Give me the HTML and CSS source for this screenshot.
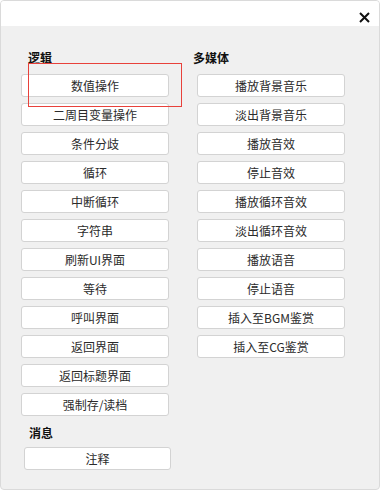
FILE: index.html
```html
<!DOCTYPE html>
<html>
<head>
<meta charset="UTF-8">
<link rel="stylesheet" href="styles.css">
</head>
<body>
<div class="WINDOW">
    <div class="TITLEBAR">
        <span class="CLOSE">
            <svg width="11" height="11" viewBox="0 0 11 11"><path d="M1 1 L10 10 M10 1 L1 10" stroke="#111" stroke-width="2"/></svg>
        </span>
    </div>
    <div class="PANEL">
        <div class="COLUMN">
            <div class="GROUP_TITLE LEFT_TITLE">逻辑</div>
            <div class="BTN">数值操作</div>
            <div class="BTN">二周目变量操作</div>
            <div class="BTN">条件分歧</div>
            <div class="BTN">循环</div>
            <div class="BTN">中断循环</div>
            <div class="BTN">字符串</div>
            <div class="BTN">刷新UI界面</div>
            <div class="BTN">等待</div>
            <div class="BTN">呼叫界面</div>
            <div class="BTN">返回界面</div>
            <div class="BTN">返回标题界面</div>
            <div class="BTN">强制存/读档</div>
            <div class="GROUP_TITLE MSG_TITLE">消息</div>
            <div class="BTN MSG_BTN">注释</div>
        </div>
        <div class="COLUMN">
            <div class="GROUP_TITLE RIGHT_TITLE">多媒体</div>
            <div class="BTN">播放背景音乐</div>
            <div class="BTN">淡出背景音乐</div>
            <div class="BTN">播放音效</div>
            <div class="BTN">停止音效</div>
            <div class="BTN">播放循环音效</div>
            <div class="BTN">淡出循环音效</div>
            <div class="BTN">播放语音</div>
            <div class="BTN">停止语音</div>
            <div class="BTN">插入至BGM鉴赏</div>
            <div class="BTN">插入至CG鉴赏</div>
        </div>
    </div>
    <div class="FOCUS_MARK"></div>
</div>
</body>
</html>
```
FILE: styles.css
```css
body {
    margin: 0;
    font-family: "Noto Sans CJK SC", "Noto Sans", sans-serif;
    font-size: 12px;
    color: #2b2b2b;
}
.WINDOW {
    position: relative;
    box-sizing: border-box;
    width: 380px;
    height: 490px;
    border: 1px solid #dadada;
    border-radius: 4px;
    background: #f0f0f0;
    overflow: hidden;
}
.TITLEBAR {
    height: 25px;
    background: #fff;
    display: flex;
    justify-content: flex-end;
}
.CLOSE {
    padding: 8px 9px 0 0;
}
.PANEL {
    display: flex;
    padding-left: 20px;
    gap: 28px;
}
.COLUMN {
    width: 148px;
    display: flex;
    flex-direction: column;
}
.GROUP_TITLE {
    font-weight: bold;
    color: #111;
    line-height: 16px;
    height: 16px;
    margin: 24px 0 8px 0;
}
.LEFT_TITLE {
    padding-left: 7px;
}
.RIGHT_TITLE {
    margin-left: -4px;
}
.MSG_TITLE {
    margin: 3px 0 6px 8px;
}
.BTN {
    box-sizing: border-box;
    height: 23px;
    line-height: 21px;
    margin-bottom: 6px;
    background: #fff;
    border: 1px solid #d3d3d3;
    border-radius: 3px;
    text-align: center;
}
.MSG_BTN {
    width: 147px;
    margin-left: 3px;
}
.FOCUS_MARK {
    position: absolute;
    left: 27px;
    top: 62px;
    width: 152px;
    height: 42px;
    border: 1px solid #e8413b;
}
```
